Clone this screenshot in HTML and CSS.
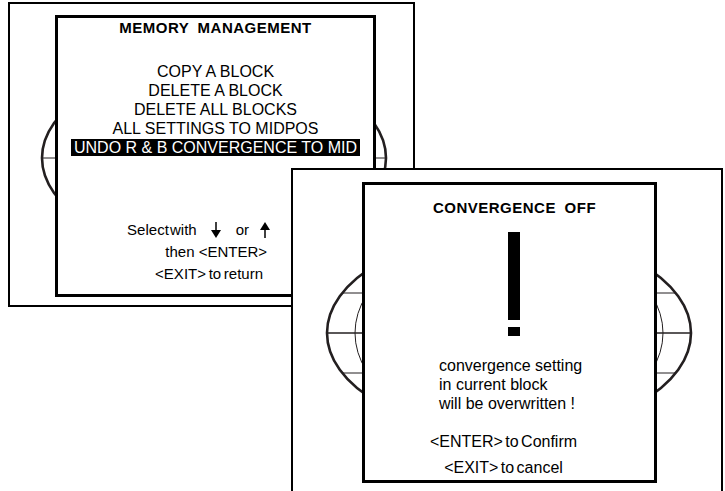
FILE: index.html
```html
<!DOCTYPE html>
<html lang="en">
<head>
    <meta charset="UTF-8">
    <meta name="viewport" content="width=device-width, initial-scale=1.0">
    <title>Memory Management</title>
    <link rel="stylesheet" href="styles.css">
</head>
<body>
    <div class="desk">
        <section class="screen screen-memory">
            <svg class="globe globe-memory" width="403" height="301" viewBox="0 0 403 301">
                <line x1="32" y1="154" x2="376" y2="154" class="globe-axis"/>
                <ellipse cx="204" cy="154" rx="172" ry="95" class="globe-rim"/>
            </svg>
            <div class="panel panel-memory">
                <h2 class="title">MEMORY MANAGEMENT</h2>
                <ul class="menu">
                    <li>COPY A BLOCK</li>
                    <li>DELETE A BLOCK</li>
                    <li>DELETE ALL BLOCKS</li>
                    <li>ALL SETTINGS TO MIDPOS</li>
                    <li><span class="selected">UNDO R &amp; B CONVERGENCE TO MID</span></li>
                </ul>
                <div class="hints">
                    <p class="hint hint-select">Select with<svg class="arrow arrow-down" width="10" height="16" viewBox="0 0 10 16"><line x1="5" y1="0" x2="5" y2="9"/><polygon points="0,8 10,8 5,16"/></svg>or<svg class="arrow arrow-up" width="10" height="16" viewBox="0 0 10 16"><line x1="5" y1="7" x2="5" y2="16"/><polygon points="0,8 10,8 5,0"/></svg></p>
                    <p class="hint">then &lt;ENTER&gt;</p>
                    <p class="hint hint-exit">&lt;EXIT&gt; to return</p>
                </div>
            </div>
        </section>

        <section class="screen screen-warning">
            <svg class="globe globe-warning" width="428" height="336" viewBox="0 0 428 336">
                <line x1="49" y1="123" x2="383" y2="123" class="globe-line"/>
                <line x1="49" y1="203" x2="383" y2="203" class="globe-line"/>
                <line x1="34" y1="163" x2="398" y2="163" class="globe-axis"/>
                <ellipse cx="216" cy="163" rx="154" ry="100" class="globe-line"/>
                <ellipse cx="216" cy="163" rx="182" ry="100" class="globe-rim"/>
            </svg>
            <div class="panel panel-warning">
                <h2 class="title title-warning">CONVERGENCE OFF</h2>
                <div class="bang">
                    <div class="bang-bar"></div>
                    <div class="bang-dot"></div>
                </div>
                <p class="message">convergence setting<br>in current block<br>will be overwritten !</p>
                <p class="actions">&lt;ENTER&gt; to Confirm<br>&lt;EXIT&gt; to cancel</p>
            </div>
        </section>
    </div>
</body>
</html>
```

FILE: styles.css
```css
html, body {
    margin: 0;
    background: #fff;
}

body {
    font-family: "Liberation Sans", Arial, sans-serif;
    color: #000;
    overflow: hidden;
}

.desk {
    position: relative;
    width: 725px;
    height: 491px;
    overflow: hidden;
}

/* the two screens overlap like windows */
.screen {
    position: absolute;
    box-sizing: border-box;
    border: 2px solid #000;
    background: #fff;
}

.screen-memory {
    left: 8px;
    top: 2px;
    width: 407px;
    height: 305px;
    padding: 11px 0 0 45px;
}

.screen-warning {
    left: 291px;
    top: 168px;
    width: 432px;
    height: 340px;
    padding: 12px 0 0 69px;
}

.globe {
    position: absolute;
    left: 0;
    top: 0;
}

.globe-rim {
    fill: none;
    stroke: #231f20;
    stroke-width: 2.6;
}

.globe-axis {
    stroke: #231f20;
    stroke-width: 1.6;
}

.globe-memory .globe-axis {
    stroke-width: 1;
}

.globe-line {
    fill: none;
    stroke: #231f20;
    stroke-width: 1;
}

.panel {
    position: relative;
    box-sizing: border-box;
    border: 3px solid #000;
    background: #fff;
    text-align: center;
}

.panel-memory {
    width: 321px;
    height: 282px;
}

.panel-warning {
    width: 295px;
    height: 301px;
}

.title {
    margin: 0;
    padding-top: 1px;
    font-size: 15px;
    font-weight: bold;
    line-height: 18px;
    letter-spacing: 0.5px;
    word-spacing: 4px;
}

.title-warning {
    padding-top: 14px;
    padding-left: 10px;
}

.menu {
    list-style: none;
    margin: 25px 0 0;
    padding: 0;
    font-size: 16px;
    line-height: 19px;
}

.selected {
    background: #000;
    color: #fff;
    padding: 0 3px;
}

.hints {
    display: flex;
    flex-direction: column;
    align-items: flex-end;
    margin-top: 62px;
    padding-right: 106px;
    font-size: 15px;
    line-height: 22px;
}

.hint {
    margin: 0;
    white-space: nowrap;
}

.hint-select {
    margin-right: -3px;
    word-spacing: -3px;
}

.hint-exit {
    margin-right: 4px;
    word-spacing: -1.5px;
}

.arrow {
    vertical-align: -3px;
}

.arrow line {
    stroke: #000;
    stroke-width: 1.5;
}

.arrow polygon {
    fill: #000;
}

.arrow-down {
    margin: 0 15px 0 14px;
}

.arrow-up {
    margin-left: 11px;
}

.bang {
    display: flex;
    flex-direction: column;
    align-items: center;
    gap: 7px;
    margin-top: 15px;
    padding-left: 8px;
}

.bang-bar {
    width: 12px;
    height: 88px;
    background: #000;
}

.bang-dot {
    width: 12px;
    height: 9px;
    background: #000;
}

.message {
    margin: 20px 0 0;
    padding-left: 74px;
    text-align: left;
    font-size: 16px;
    line-height: 19px;
}

.actions {
    margin: 16px 0 0;
    padding-right: 12px;
    font-size: 16px;
    line-height: 26px;
    word-spacing: -2px;
}
```
